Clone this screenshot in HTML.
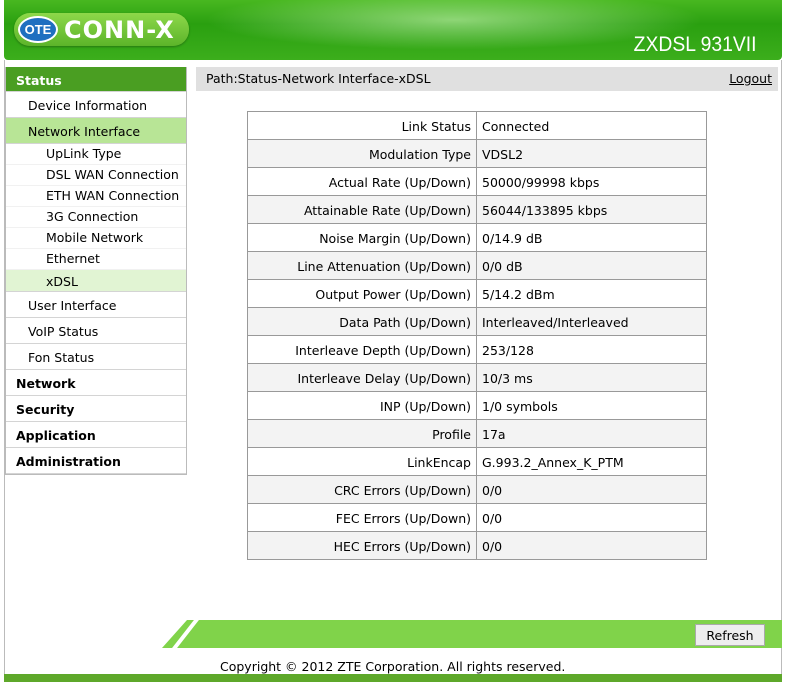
<!DOCTYPE html>
<html><head><meta charset="utf-8"><style>
*{margin:0;padding:0;box-sizing:border-box}
body{width:787px;height:685px;background:#fff;font-family:"DejaVu Sans",Verdana,sans-serif;font-size:12.5px;color:#000;position:relative;overflow:hidden}
.hdr{position:absolute;left:4px;top:0;width:778px;height:60px;background:linear-gradient(180deg,#48b820 0%,#2aa010 40%,#3cae1c 100%);border-radius:0 0 4px 4px;overflow:hidden}
.wave{position:absolute;left:200px;top:-10px;width:500px;height:60px;border-radius:50%;background:radial-gradient(ellipse at center,rgba(220,255,200,.55),rgba(255,255,255,0) 70%)}
.logo{position:absolute;left:10px;top:13px;width:175px;height:33px;border-radius:16px;background:linear-gradient(#8ed84a,#5cb42a);box-shadow:0 1px 2px rgba(0,0,0,.3)}
.ote{position:absolute;left:4px;top:3px;width:40px;height:27px;border-radius:50%;background:#1f6fc0;border:2px solid #fff;color:#fff;font:bold 13px "Liberation Sans",sans-serif;text-align:center;line-height:23px}
.cx{position:absolute;left:50px;top:3px;color:#fff;font:bold 24px "DejaVu Sans",sans-serif;letter-spacing:1px}
.model{position:absolute;right:26px;top:33px;color:#fff;font:21px "Liberation Sans",sans-serif;transform:scaleX(.92);transform-origin:right}
.frame{position:absolute;left:4px;top:60px;width:778px;height:620px;border-left:1px solid #bbb;border-right:1px solid #bbb}
.side{position:absolute;left:5px;top:67px;width:182px;border:1px solid #bbb;border-top:none}
.side div{height:26px;line-height:27px;border-bottom:1px solid #d4d4d4;padding-left:22px}
.side .top{padding-left:10px;font-weight:bold}
.side .st{background:#4a9e22;color:#fff;height:25px}
.side .sel{background:#b8e596}
.side .sub{height:21px;line-height:20px;padding-left:40px;border-bottom:1px solid #f1f1f1}
.side .subsel{height:22px;line-height:24px;padding-left:40px;background:#e1f4d3;border-bottom:1px solid #d4d4d4}
.path{position:absolute;left:196px;top:67px;width:582px;height:24px;background:#e0e0e0;line-height:24px;padding-left:10px}
.path a{position:absolute;right:6px;top:0;color:#000;text-decoration:underline}
table{position:absolute;left:247px;top:111px;width:460px;border-collapse:collapse}
td{border:1px solid #999;height:28px;padding:2px 5px 0}
td.l{text-align:right;width:229px}
tr:nth-child(even) td{background:#f3f3f3}
.bar{position:absolute;left:162px;top:620px;width:620px;height:28px;background:#80d34a;clip-path:polygon(25px 0,100% 0,100% 100%,0 100%)}
.slash{position:absolute;left:183px;top:620px;width:5px;height:28px;background:#fff;transform:skewX(-38deg)}
.btn{position:absolute;left:695px;top:624px;width:70px;height:22px;background:#eee;border:1px solid #aaa;text-align:center;line-height:21px}
.copy{position:absolute;left:220px;top:659px;font-size:12.5px}
.foot{position:absolute;left:4px;top:674px;width:778px;height:8px;background:#5ea82a}
</style></head><body>
<div class="hdr"><div class="wave"></div>
<div class="logo"><div class="ote">OTE</div><div class="cx">CONN-X</div></div>
<div class="model">ZXDSL 931VII</div></div>
<div class="frame"></div>
<div class="side">
<div class="top st">Status</div>
<div>Device Information</div>
<div class="sel">Network Interface</div>
<div class="sub">UpLink Type</div>
<div class="sub">DSL WAN Connection</div>
<div class="sub">ETH WAN Connection</div>
<div class="sub">3G Connection</div>
<div class="sub">Mobile Network</div>
<div class="sub">Ethernet</div>
<div class="subsel">xDSL</div>
<div>User Interface</div>
<div>VoIP Status</div>
<div>Fon Status</div>
<div class="top">Network</div>
<div class="top">Security</div>
<div class="top">Application</div>
<div class="top">Administration</div>
</div>
<div class="path">Path:Status-Network Interface-xDSL<a>Logout</a></div>
<table>
<tr><td class="l">Link Status</td><td>Connected</td></tr>
<tr><td class="l">Modulation Type</td><td>VDSL2</td></tr>
<tr><td class="l">Actual Rate (Up/Down)</td><td>50000/99998 kbps</td></tr>
<tr><td class="l">Attainable Rate (Up/Down)</td><td>56044/133895 kbps</td></tr>
<tr><td class="l">Noise Margin (Up/Down)</td><td>0/14.9 dB</td></tr>
<tr><td class="l">Line Attenuation (Up/Down)</td><td>0/0 dB</td></tr>
<tr><td class="l">Output Power (Up/Down)</td><td>5/14.2 dBm</td></tr>
<tr><td class="l">Data Path (Up/Down)</td><td>Interleaved/Interleaved</td></tr>
<tr><td class="l">Interleave Depth (Up/Down)</td><td>253/128</td></tr>
<tr><td class="l">Interleave Delay (Up/Down)</td><td>10/3 ms</td></tr>
<tr><td class="l">INP (Up/Down)</td><td>1/0 symbols</td></tr>
<tr><td class="l">Profile</td><td>17a</td></tr>
<tr><td class="l">LinkEncap</td><td>G.993.2_Annex_K_PTM</td></tr>
<tr><td class="l">CRC Errors (Up/Down)</td><td>0/0</td></tr>
<tr><td class="l">FEC Errors (Up/Down)</td><td>0/0</td></tr>
<tr><td class="l">HEC Errors (Up/Down)</td><td>0/0</td></tr>
</table>
<div class="bar"></div><div class="slash"></div>
<div class="btn">Refresh</div>
<div class="copy">Copyright © 2012 ZTE Corporation. All rights reserved.</div>
<div class="foot"></div>
</body></html>
